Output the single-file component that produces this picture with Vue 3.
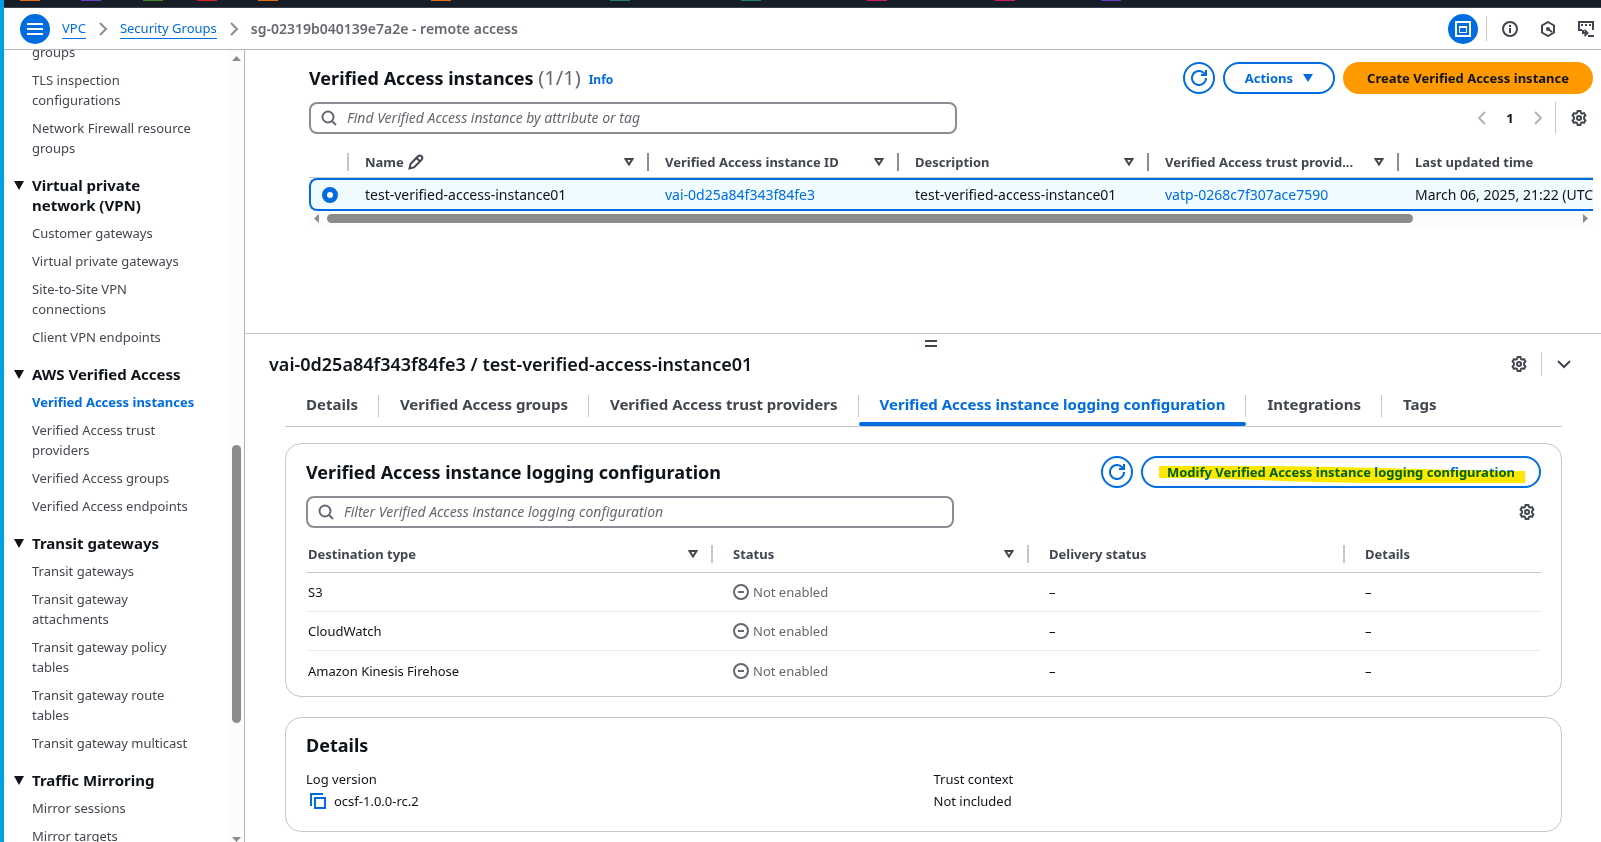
<template>
  <div class="shell">
    <div class="service-bar" aria-hidden="true">
      <span v-for="(s, i) in services" :key="'sv' + i" class="service" :style="{ left: s.x + 'px', background: s.color }"></span>
    </div>

    <header class="top-bar">
      <button class="round-btn" type="button" aria-label="Menu">
        <svg width="16" height="16" viewBox="0 0 16 16"><path d="M0 3h16M0 8h16M0 13h16" /></svg>
      </button>
      <nav class="crumbs" aria-label="Breadcrumbs">
        <a href="#">VPC</a>
        <svg class="crumb-sep" width="16" height="16" viewBox="0 0 16 16"><path d="M5 2l6 6-6 6" /></svg>
        <a href="#">Security Groups</a>
        <svg class="crumb-sep" width="16" height="16" viewBox="0 0 16 16"><path d="M5 2l6 6-6 6" /></svg>
        <span class="crumb-last">sg-02319b040139e7a2e - remote access</span>
      </nav>
      <div class="tools">
        <button class="round-btn" type="button" aria-label="Split panel">
          <svg width="16" height="16" viewBox="0 0 16 16"><path d="M1 1h14v14H1z" /><path d="M4.500 6.500h7v5h-7z" stroke-width="1" /><path d="M4 6h8" /></svg>
        </button>
        <span class="tool-sep"></span>
        <button class="icon-btn" type="button" aria-label="Info">
          <svg width="16" height="16" viewBox="0 0 16 16"><circle cx="8" cy="8" r="7" /><path d="M8 7v5M8 4v2" /></svg>
        </button>
        <button class="icon-btn" type="button" aria-label="Amazon Q">
          <svg width="16" height="16" viewBox="0 0 16 16"><path d="M8 1l6 3.500v7L8 15l-6-3.500v-7z" /><path d="M8 8l4 3" /><circle cx="8" cy="8" r="1" /></svg>
        </button>
        <button class="icon-btn" type="button" aria-label="CloudShell">
          <svg width="16" height="16" viewBox="0 0 16 16"><path d="M4 9H1V1h14v8" /><path d="M3 4h2M7 4h2M11 4h2M10 15h6" /><path d="M5 9v3h4M6.500 9l3 3-3 3" /></svg>
        </button>
      </div>
    </header>

    <div class="body">
      <aside class="side">
        <nav class="side-nav" aria-label="VPC navigation">
          <section v-for="(group, g) in navGroups" :key="'g' + g">
            <h3 v-if="group.title">
              <svg width="10" height="9" viewBox="0 0 10 9"><path d="M0 0h10L5 9z" /></svg>
              {{ group.title }}
            </h3>
            <a v-for="item in group.items" :key="item" href="#" :class="{ current: item === current }">{{ item }}</a>
          </section>
        </nav>
        <div class="v-scroll" aria-hidden="true">
          <svg width="9" height="5" viewBox="0 0 9 5"><path d="M4.500 0L9 5H0z" /></svg>
          <span class="v-track"><i></i></span>
          <svg width="9" height="5" viewBox="0 0 9 5"><path d="M0 0h9L4.500 5z" /></svg>
        </div>
      </aside>

      <main class="main">
        <section class="instances">
          <div class="title-row">
            <h1>Verified Access instances <span class="count">(1/1)</span></h1>
            <a class="info" href="#">Info</a>
            <div class="actions">
              <button class="btn btn-round" type="button" aria-label="Refresh">
                <svg width="16" height="16" viewBox="0 0 16 16"><path :d="refreshPath" /></svg>
              </button>
              <button class="btn" type="button">
                Actions
                <svg class="caret" width="10" height="8" viewBox="0 0 10 8"><path d="M0 0h10L5 8z" /></svg>
              </button>
              <button class="btn btn-primary" type="button">Create Verified Access instance</button>
            </div>
          </div>

          <div class="filter-row">
            <label class="search">
              <svg width="16" height="16" viewBox="0 0 16 16"><circle cx="7" cy="7" r="5.500" /><path d="M11 11l4 4" /></svg>
              <input type="text" aria-label="Find instance" placeholder="Find Verified Access instance by attribute or tag">
            </label>
            <div class="pager">
              <button class="page-arrow" type="button" aria-label="Previous page">
                <svg width="16" height="16" viewBox="0 0 16 16"><path d="M11 2L5 8l6 6" /></svg>
              </button>
              <button class="page-num" type="button">1</button>
              <button class="page-arrow" type="button" aria-label="Next page">
                <svg width="16" height="16" viewBox="0 0 16 16"><path d="M5 2l6 6-6 6" /></svg>
              </button>
              <span class="pager-sep"></span>
              <button class="icon-btn" type="button" aria-label="Preferences">
                <svg width="16" height="16" viewBox="0 0 16 16"><path :d="gearPath" /><circle cx="8" cy="8" r="2" /></svg>
              </button>
            </div>
          </div>

          <div class="table-wrap">
            <table class="inst-table">
              <colgroup>
                <col class="c-pick"><col class="c-name"><col class="c-mid"><col class="c-mid"><col class="c-mid"><col>
              </colgroup>
              <thead>
                <tr>
                  <th aria-label="Selection"></th>
                  <th v-for="(h, i) in instanceHeads" :key="'h' + i">
                    <div class="head">
                      <span>{{ h }}</span>
                      <svg v-if="i === 0" class="edit" width="16" height="16" viewBox="0 0 16 16"><path d="M1.500 14.500l1-4.500L10 2.300a2.400 2.400 0 0 1 3.600 0 2.400 2.400 0 0 1 0 3.500L6 13.400z" /><path d="M8.500 4l3.500 3.500" /></svg>
                      <svg v-if="i < 4" class="sort" width="10" height="8" viewBox="0 0 10 8"><path d="M1.500 1h7L5 6.500z" /></svg>
                    </div>
                  </th>
                </tr>
              </thead>
              <tbody>
                <tr>
                  <td><input type="radio" name="instance" aria-label="test-verified-access-instance01" checked></td>
                  <td>test-verified-access-instance01</td>
                  <td><a href="#">vai-0d25a84f343f84fe3</a></td>
                  <td>test-verified-access-instance01</td>
                  <td><a href="#">vatp-0268c7f307ace7590</a></td>
                  <td>March 06, 2025, 21:22 (UTC</td>
                </tr>
              </tbody>
            </table>
          </div>
          <div class="h-scroll" aria-hidden="true">
            <svg width="5" height="9" viewBox="0 0 5 9"><path d="M5 0v9L0 4.500z" /></svg>
            <span class="h-track"><i></i></span>
            <svg width="5" height="9" viewBox="0 0 5 9"><path d="M0 0v9l5-4.500z" /></svg>
          </div>
        </section>

        <section class="panel">
          <div class="handle" aria-hidden="true"><span></span></div>
          <div class="panel-head">
            <h2>vai-0d25a84f343f84fe3 / test-verified-access-instance01</h2>
            <button class="icon-btn" type="button" aria-label="Panel preferences">
              <svg width="16" height="16" viewBox="0 0 16 16"><path :d="gearPath" /><circle cx="8" cy="8" r="2" /></svg>
            </button>
            <span class="panel-sep"></span>
            <button class="icon-btn" type="button" aria-label="Close panel">
              <svg width="16" height="16" viewBox="0 0 16 16"><path d="M2 5l6 6 6-6" /></svg>
            </button>
          </div>

          <div class="panel-body">
            <div class="tabs" role="tablist">
              <button v-for="t in tabs" :key="t" type="button" role="tab" :aria-selected="t === activeTab" :class="{ active: t === activeTab }">
                <span>{{ t }}</span>
              </button>
            </div>

            <section class="card logging">
              <div class="title-row">
                <h2>Verified Access instance logging configuration</h2>
                <div class="actions">
                  <button class="btn btn-round" type="button" aria-label="Refresh">
                    <svg width="16" height="16" viewBox="0 0 16 16"><path :d="refreshPath" /></svg>
                  </button>
                  <button class="btn marked" type="button">
                    Modify Verified Access instance logging configuration
                    <svg class="marker" viewBox="0 0 367 17" preserveAspectRatio="none" aria-hidden="true"><path d="M0 0H90C190 0 290 5 367 5V17H230C130 17 90 12 0 12z" /></svg>
                  </button>
                </div>
              </div>
              <div class="filter-row">
                <label class="search">
                  <svg width="16" height="16" viewBox="0 0 16 16"><circle cx="7" cy="7" r="5.500" /><path d="M11 11l4 4" /></svg>
                  <input type="text" aria-label="Filter logging" placeholder="Filter Verified Access instance logging configuration">
                </label>
                <button class="icon-btn" type="button" aria-label="Table preferences">
                  <svg width="16" height="16" viewBox="0 0 16 16"><path :d="gearPath" /><circle cx="8" cy="8" r="2" /></svg>
                </button>
              </div>
              <table class="log-table">
                <colgroup><col class="l-type"><col class="l-mid"><col class="l-mid"><col></colgroup>
                <thead>
                  <tr>
                    <th v-for="(h, i) in logHeads" :key="'l' + i">
                      <div class="head">
                        <span>{{ h }}</span>
                        <svg v-if="i < 2" class="sort" width="10" height="8" viewBox="0 0 10 8"><path d="M1.500 1h7L5 6.500z" /></svg>
                      </div>
                    </th>
                  </tr>
                </thead>
                <tbody>
                  <tr v-for="d in destinations" :key="d">
                    <td>{{ d }}</td>
                    <td>
                      <span class="status">
                        <svg width="16" height="16" viewBox="0 0 16 16"><circle cx="8" cy="8" r="7" /><path d="M5 8h6" /></svg>
                        Not enabled
                      </span>
                    </td>
                    <td>–</td>
                    <td>–</td>
                  </tr>
                </tbody>
              </table>
            </section>

            <section class="card details">
              <h2>Details</h2>
              <dl>
                <div>
                  <dt>Log version</dt>
                  <dd>
                    <button class="copy" type="button" aria-label="Copy log version">
                      <svg width="16" height="16" viewBox="0 0 16 16"><path d="M5 5h10v10H5z" /><path d="M1 13V1h12" /></svg>
                    </button>
                    ocsf-1.0.0-rc.2
                  </dd>
                </div>
                <div>
                  <dt>Trust context</dt>
                  <dd>Not included</dd>
                </div>
              </dl>
            </section>
          </div>
        </section>
      </main>
    </div>
  </div>
</template>

<script setup>
import { ref } from 'vue'

const services = [
  { x: 16, color: '#e0701c' },
  { x: 77, color: '#6a3fd0' },
  { x: 139, color: '#3c8a24' },
  { x: 193, color: '#d0202c' },
  { x: 254, color: '#e0701c' },
  { x: 427, color: '#e0701c' },
  { x: 606, color: '#1f7f68' },
  { x: 737, color: '#1f7f68' },
  { x: 863, color: '#cf1d5e' },
  { x: 991, color: '#cf1d5e' },
  { x: 1097, color: '#6238c4' }
]

const current = ref('Verified Access instances')
const navGroups = [
  {
    items: ['groups', 'TLS inspection configurations', 'Network Firewall resource groups']
  },
  {
    title: 'Virtual private network (VPN)',
    items: ['Customer gateways', 'Virtual private gateways', 'Site-to-Site VPN connections', 'Client VPN endpoints']
  },
  {
    title: 'AWS Verified Access',
    items: ['Verified Access instances', 'Verified Access trust providers', 'Verified Access groups', 'Verified Access endpoints']
  },
  {
    title: 'Transit gateways',
    items: ['Transit gateways', 'Transit gateway attachments', 'Transit gateway policy tables', 'Transit gateway route tables', 'Transit gateway multicast']
  },
  {
    title: 'Traffic Mirroring',
    items: ['Mirror sessions', 'Mirror targets']
  }
]

const instanceHeads = ['Name', 'Verified Access instance ID', 'Description', 'Verified Access trust provid...', 'Last updated time']

const activeTab = ref('Verified Access instance logging configuration')
const tabs = [
  'Details',
  'Verified Access groups',
  'Verified Access trust providers',
  'Verified Access instance logging configuration',
  'Integrations',
  'Tags'
]

const logHeads = ['Destination type', 'Status', 'Delivery status', 'Details']
const destinations = ['S3', 'CloudWatch', 'Amazon Kinesis Firehose']

const refreshPath = 'M15 8a7 7 0 1 1-2-4.900L15 5M10 5h5V0'
const gearPath = 'M6.600 1h2.800l.5 1.900 1.300.7L13 3.100l1.400 2.400-1.300 1.600v1.800l1.300 1.600-1.400 2.400-1.800-.5-1.300.7-.5 1.900H6.600l-.5-1.900-1.300-.7-1.800.5-1.400-2.400 1.300-1.600V7.100L1.600 5.500 3 3.100l1.800.5 1.300-.7z'
</script>

<style>
body { background: #fff; overflow: hidden; }
</style>

<style scoped>
.shell {
  --blue: #006ce0;
  --ink: #0f141a;
  --soft: #424650;
  --muted: #656871;
  --line: #c6c6cd;
  --mid: #8c8c94;
  display: flex;
  flex-direction: column;
  box-sizing: border-box;
  height: 100vh;
  border-left: 4px solid #00a1e4;
  color: var(--ink);
  font: 13px/20px "Noto Sans", "Open Sans", sans-serif;
}
.shell *, .shell *::before, .shell *::after { box-sizing: border-box; }
a { color: var(--blue); text-decoration: none; }
button { margin: 0; padding: 0; border: 0; background: none; color: inherit; font: inherit; cursor: pointer; }
svg { display: block; flex: none; fill: none; stroke: currentColor; stroke-width: 2; }
h1, h2, h3, dl, dd { margin: 0; }

.service-bar { position: relative; flex: none; height: 8px; background: #161d26; border-bottom: 1px solid #3a4049; overflow: hidden; }
.service { position: absolute; top: 0; width: 20px; height: 1px; }

.top-bar { display: flex; align-items: center; flex: none; height: 42px; padding: 0 7px 0 16px; border-bottom: 1px solid #b4b4bb; }
.round-btn { display: grid; place-items: center; width: 30px; height: 30px; border-radius: 50%; background: var(--blue); color: #fff; }
.crumbs { display: flex; align-items: center; gap: 9px; margin-left: 12px; }
.crumbs a { border-bottom: 1px solid var(--blue); line-height: 19px; }
.crumb-sep { color: var(--mid); }
.crumb-last { color: var(--muted); font-size: 14px; font-weight: 600; }
.tools { display: flex; align-items: center; margin-left: auto; }
.tools .icon-btn { margin-left: 22px; }
.tools .icon-btn:nth-of-type(2) { margin-left: 15px; }
.tool-sep { width: 1px; height: 25px; margin-left: 8px; background: var(--line); }
.icon-btn { color: var(--soft); }

.body { display: flex; flex: 1; min-height: 0; }
.side { display: flex; flex: none; width: 241px; border-right: 1px solid #b4b4bb; overflow: hidden; }
.side-nav { flex: 1; margin-top: -16px; padding-left: 28px; overflow: hidden; }
.side-nav section { margin-bottom: 17px; }
.side-nav a { display: block; max-width: 168px; margin-top: 8px; color: var(--soft); }
.side-nav a.current { color: var(--blue); font-weight: 700; }
.side-nav h3 { position: relative; max-width: 140px; font-size: 15px; line-height: 20px; font-weight: 700; }
.side-nav section:nth-child(n + 3) h3 { max-width: none; }
.side-nav h3 svg { position: absolute; left: -18px; top: 6px; fill: currentColor; stroke: none; }
.v-scroll { display: flex; flex-direction: column; align-items: center; width: 15px; padding: 6px 0 0; background: #fcfcfc; color: #8b8b8b; }
.v-scroll svg, .h-scroll svg { fill: currentColor; stroke: none; }
.v-track { display: flex; flex: 1; flex-direction: column; }
.v-track::before { content: ""; flex: 384; }
.v-track i { flex: 278; width: 9px; border-radius: 5px; background: #8b8b8b; }
.v-track::after { content: ""; flex: 114; }

.main { display: flex; flex: 1; flex-direction: column; min-width: 0; }
.instances { flex: 1; min-height: 0; padding: 12px 8px 0 64px; overflow: hidden; }
.title-row { display: flex; align-items: center; }
.title-row h1, .card h2 { font-size: 18px; line-height: 24px; font-weight: 700; }
.title-row h1 .count { color: var(--muted); font-size: 20px; font-weight: 400; }
.info { margin: 4px 0 0 8px; font-size: 12px; line-height: 16px; font-weight: 700; }
.actions { display: flex; gap: 8px; margin-left: auto; }
.btn { position: relative; display: flex; align-items: center; justify-content: center; gap: 10px; height: 32px; padding: 0 20px; border: 2px solid var(--blue); border-radius: 16px; color: var(--blue); font-weight: 700; white-space: nowrap; }
.btn-round { width: 32px; padding: 0; }
.btn-primary { padding: 0 22px; border-color: #ff9900; background: #ff9900; color: var(--ink); }
.caret { fill: currentColor; stroke: none; }
.marked { padding: 0 24px; }
.marker { position: absolute; left: 16px; top: 8px; width: calc(100% - 30px); height: 17px; fill: #ffe800; stroke: none; mix-blend-mode: multiply; }

.filter-row { display: flex; align-items: center; justify-content: space-between; margin-top: 8px; }
.search { display: flex; align-items: center; flex: 0 1 648px; gap: 10px; height: 32px; padding: 0 10px; border: 2px solid var(--mid); border-radius: 8px; color: var(--muted); font-size: 14px; }
.search input { flex: 1; min-width: 0; padding: 0; border: 0; outline: 0; background: none; color: var(--ink); font: inherit; }
.search input::placeholder { color: var(--muted); font-style: italic; opacity: 1; }
.pager { display: flex; align-items: center; padding-right: 6px; }
.page-arrow { color: #b4b4bb; }
.page-num { width: 40px; font-weight: 700; }
.pager-sep { width: 1px; height: 32px; margin: 0 15px 0 9px; background: var(--line); }

.table-wrap { margin-top: 10px; overflow: hidden; }
table { border-collapse: separate; border-spacing: 0; table-layout: fixed; width: 100%; }
th, td { padding: 0; text-align: left; white-space: nowrap; }
th { color: var(--soft); font-weight: 700; }
.head { display: flex; align-items: center; height: 18px; }
.sort { margin-left: auto; }
.edit { margin-left: 4px; }

.inst-table { width: 115%; }
.c-pick { width: 40px; }
.c-name { width: 300px; }
.c-mid { width: 250px; }
.inst-table th { height: 34px; padding: 2px 0 0; border-bottom: 1px solid var(--line); }
.inst-table th:nth-child(n + 2) .head { padding: 0 13px 0 16px; border-right: 2px solid var(--mid); }
.inst-table th:first-child::after { content: ""; display: block; height: 18px; border-right: 2px solid var(--line); }
.inst-table th:last-child .head { border-right: 0; }
.inst-table td { height: 33px; padding: 0 0 0 16px; border: solid var(--blue); border-width: 2px 0; background: #f0fbff; font-size: 14px; }
.inst-table td:first-child { padding-left: 11px; border-left-width: 2px; border-radius: 8px 0 0 8px; }
.inst-table input { display: block; width: 16px; height: 16px; margin: 0; border: 5px solid var(--blue); border-radius: 50%; background: #fff; appearance: none; }
.h-scroll { display: flex; align-items: center; height: 15px; padding: 0 5px; background: #fcfcfc; color: #8b8b8b; }
.h-track { flex: 1; padding: 0 8px; }
.h-track i { display: block; width: 87%; height: 9px; border-radius: 5px; background: #8b8b8b; }

.panel { flex: none; border-top: 1px solid var(--line); }
.handle { display: flex; justify-content: center; height: 18px; padding: 6px 0 0 16px; }
.handle span { width: 12px; height: 7px; border: solid var(--soft); border-width: 2px 0; }
.panel-head { display: flex; align-items: center; height: 24px; padding: 0 29px 0 24px; }
.panel-head h2 { margin-right: auto; font-size: 18px; line-height: 24px; font-weight: 600; }
.panel-sep { width: 1px; height: 24px; margin: 0 14px; background: var(--line); }
.panel-body { padding: 0 39px 10px 40px; }
.tabs { display: flex; height: 51px; border-bottom: 1px solid var(--line); }
.tabs button { position: relative; height: 51px; padding: 9px 0 0; color: var(--soft); font-size: 15px; font-weight: 700; white-space: nowrap; }
.tabs button span { display: block; height: 22px; padding: 0 20px 0 21px; border-right: 1px solid var(--line); line-height: 18px; }
.tabs button:last-child span { border-right: 0; }
.tabs .active { color: var(--blue); }
.tabs .active::after { content: ""; position: absolute; left: 0; right: 0; bottom: 1px; height: 4px; border-radius: 2px; background: var(--blue); }

.card { margin-top: 16px; padding: 12px 20px 6px; border: 1px solid var(--line); border-radius: 16px; }
.logging .icon-btn { margin-right: 6px; }
.log-table { margin-top: 8px; }
.l-type { width: 407px; }
.l-mid { width: 316px; }
.log-table th { height: 37px; padding: 0; border-bottom: 1px solid var(--line); }
.log-table .head { padding: 0 13px 0 20px; border-right: 2px solid var(--line); }
.log-table th:last-child .head { border-right: 0; }
.log-table td { height: 39px; padding: 0 0 0 20px; border-bottom: 1px solid #ebebf0; }
.log-table tr:last-child td { border-bottom: 0; }
.log-table td:first-child, .log-table th:first-child .head { padding-left: 2px; }
.status { display: flex; align-items: center; gap: 4px; color: var(--muted); }

.details { margin-top: 20px; padding: 15px 20px 20px; }
dl { display: grid; grid-template-columns: 1fr 1fr; gap: 20px; margin-top: 12px; }
dd { display: flex; align-items: center; gap: 8px; margin-top: 2px; }
.copy { margin-left: 4px; color: var(--blue); }
</style>
